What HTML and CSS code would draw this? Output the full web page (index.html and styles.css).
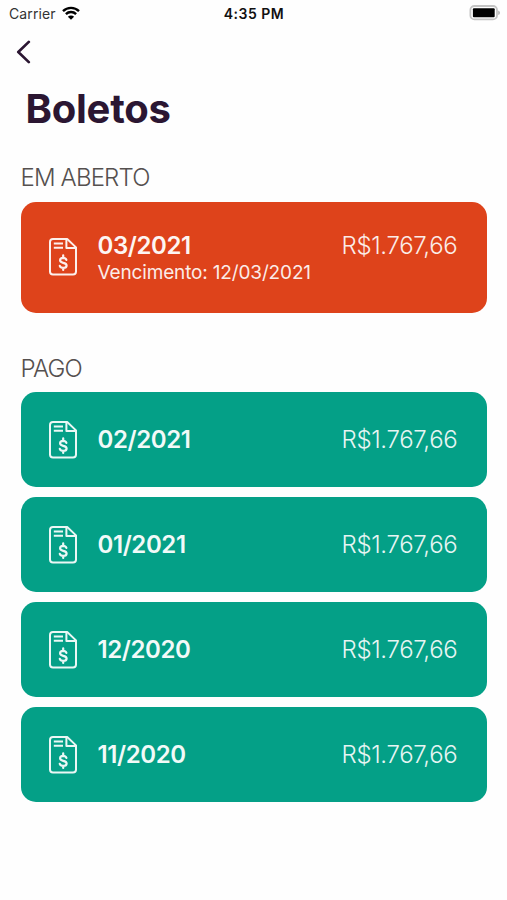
FILE: index.html
```
<!DOCTYPE html>
<html lang="pt-BR">
<head>
  <meta charset="UTF-8">
  <meta name="viewport" content="width=device-width, initial-scale=1">
  <title>Boletos</title>
  <link rel="stylesheet" href="styles.css">
</head>
<body>
  <svg class="sprite" aria-hidden="true">
    <symbol id="icon-boleto" viewBox="0 0 30 40">
      <path d="M5 2H19.2L28 10.4V34.5Q28 37.5 25 37.5H5Q2 37.5 2 34.5V5Q2 2 5 2Z"/>
      <path d="M18.4 2.4V10.9H27.6M5.8 6.4H15M5.8 10.7H15"/>
      <path class="dollar" d="M15.2 18.3V20.5M15.2 30.8V33M18.4 22.9Q17.6 20.9 15.1 20.9Q12.1 21 12.1 23.3Q12.1 25.2 15.2 25.8Q18.6 26.5 18.6 28.4Q18.6 30.8 15.2 30.8Q12.5 30.8 11.8 28.9"/>
    </symbol>
  </svg>

  <div class="status-bar">
    <div class="carrier">
      <span>Carrier</span>
      <svg class="wifi" viewBox="0 0 18 14">
        <path d="M1 5.2A11.4 11.4 0 0 1 17 5.2M3.9 8.1A7.2 7.2 0 0 1 14.1 8.1"/>
        <path class="wifi-dot" d="M9 13.8L5.9 10.7A4.4 4.4 0 0 1 12.1 10.7Z"/>
      </svg>
    </div>
    <span class="time">4:35 PM</span>
    <svg class="battery" viewBox="0 0 32 16">
      <rect class="battery-shell" x="1.4" y="1" width="26.6" height="13.4" rx="4"/>
      <path class="battery-tip" d="M29.2 5.4Q31 6 31 7.7Q31 9.4 29.2 10Z"/>
      <rect x="3.9" y="3.2" width="21.8" height="9" rx="1"/>
    </svg>
  </div>

  <header class="header">
    <a class="back" href="#" aria-label="Voltar">
      <svg viewBox="0 0 16 24"><path d="M13.8 1.9L3.3 12L13.8 22.1"/></svg>
    </a>
    <h1>Boletos</h1>
  </header>

  <main>
    <section>
      <h2>EM ABERTO</h2>
      <div class="card aberto">
        <svg class="icon"><use href="#icon-boleto"/></svg>
        <div class="info">
          <div class="linha">
            <strong class="mes">03/2021</strong>
            <span class="valor">R$1.767,66</span>
          </div>
          <p class="vencimento">Vencimento: 12/03/2021</p>
        </div>
      </div>
    </section>

    <section>
      <h2 class="titulo-pago">PAGO</h2>
      <div class="card pago">
        <svg class="icon"><use href="#icon-boleto"/></svg>
        <strong class="mes">02/2021</strong>
        <span class="valor">R$1.767,66</span>
      </div>
      <div class="card pago">
        <svg class="icon"><use href="#icon-boleto"/></svg>
        <strong class="mes">01/2021</strong>
        <span class="valor">R$1.767,66</span>
      </div>
      <div class="card pago">
        <svg class="icon"><use href="#icon-boleto"/></svg>
        <strong class="mes">12/2020</strong>
        <span class="valor">R$1.767,66</span>
      </div>
      <div class="card pago">
        <svg class="icon"><use href="#icon-boleto"/></svg>
        <strong class="mes">11/2020</strong>
        <span class="valor">R$1.767,66</span>
      </div>
    </section>
  </main>
</body>
</html>
```
FILE: styles.css
```
* {
  box-sizing: border-box;
}
body {
  margin: 0;
  background-color: #fefefe;
  font-family: Inter, "Liberation Sans", sans-serif;
}
h1, h2, p {
  margin: 0;
}
.sprite {
  display: block;
  width: 0;
  height: 0;
}

/* status bar */
.status-bar {
  display: grid;
  grid-template-columns: 1fr auto 1fr;
  align-items: center;
  height: 27px;
  padding: 0 6px 0 9px;
  color: #111;
}
.carrier {
  display: flex;
  align-items: center;
  gap: 6px;
  font-size: 14px;
  letter-spacing: 0.1px;
  color: #333;
}
.wifi {
  width: 18px;
  height: 14px;
  margin-top: -2px;
  fill: none;
  stroke: #000;
  stroke-width: 2.4;
}
.wifi-dot {
  fill: #000;
  stroke: none;
}
.time {
  padding-right: 2px;
  font-size: 14px;
  font-weight: 600;
  letter-spacing: 0.5px;
}
.battery {
  justify-self: end;
  width: 32px;
  height: 16px;
  margin-top: -1px;
}
.battery-shell {
  fill: #fff;
  stroke: #c4c4c4;
  stroke-width: 1.8;
}
.battery-tip {
  fill: #b4b4b4;
}

/* header */
.header {
  height: 136px;
  padding-top: 13px;
}
.back {
  display: block;
  width: 16px;
  height: 24px;
  margin-left: 15px;
}
.back svg {
  display: block;
  width: 16px;
  height: 24px;
  fill: none;
  stroke: #2b1632;
  stroke-width: 2.7;
  stroke-linecap: round;
  stroke-linejoin: round;
}
h1 {
  padding: 21px 0 0 25.5px;
  font-size: 40px;
  line-height: 48px;
  font-weight: 700;
  letter-spacing: -0.25px;
  color: #2b1632;
}

/* lista */
main {
  padding: 0 19.7px 0 20.5px;
}
h2 {
  height: 38.5px;
  line-height: 29px;
  font-size: 24px;
  font-weight: 300;
  letter-spacing: -0.85px;
  color: #55504f;
}
.titulo-pago {
  margin-top: 41px;
}
.card {
  display: flex;
  align-items: center;
  padding: 0 30px 0 27.5px;
  border-radius: 15px;
  color: #fff;
}
.card + .card {
  margin-top: 10px;
}
.aberto {
  height: 111px;
  background-color: #de431b;
}
.pago {
  height: 95px;
  background-color: #04a087;
}
.icon {
  flex: none;
  width: 30px;
  height: 40px;
  margin-right: 19.5px;
  fill: none;
  stroke: #fff;
  stroke-width: 2;
  stroke-linejoin: round;
  opacity: .92;
}
.dollar {
  stroke-width: 2.2;
  stroke-linecap: round;
}
.info {
  flex: 1;
  padding-top: 2px;
}
.linha {
  display: flex;
}
.mes {
  font-size: 24px;
  line-height: 28px;
  font-weight: 600;
  letter-spacing: -0.4px;
  opacity: .95;
}
.valor {
  margin-left: auto;
  font-size: 24px;
  line-height: 28px;
  font-weight: 300;
  letter-spacing: -0.35px;
  opacity: .9;
}
.vencimento {
  font-size: 19px;
  line-height: 25px;
  letter-spacing: -0.15px;
  opacity: .9;
}
```
